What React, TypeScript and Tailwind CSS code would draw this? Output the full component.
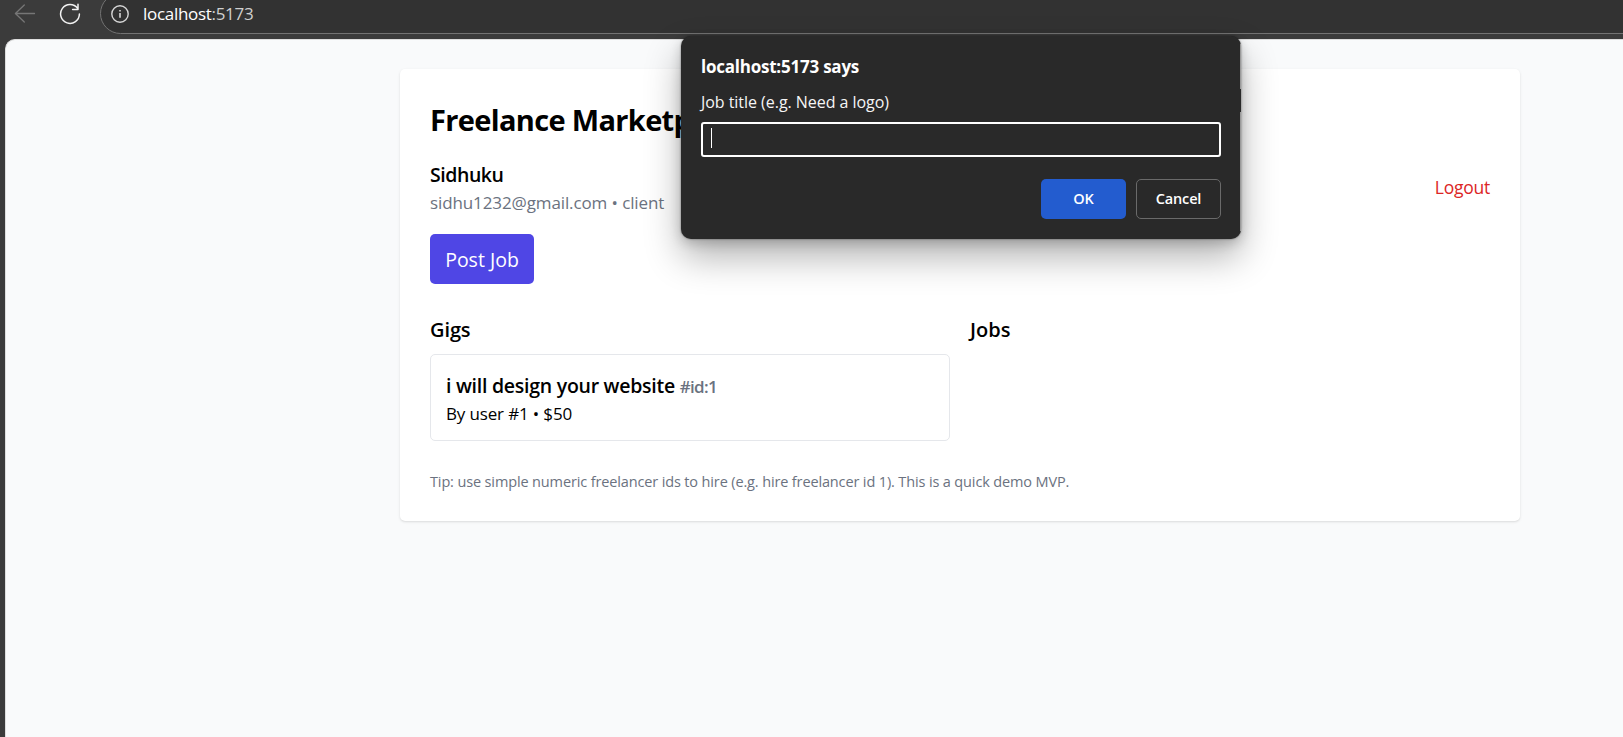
function BrowserBar() {
  return (
    <div className="flex h-[39px] w-full shrink-0 items-start bg-[#3b3b3b]">
      <svg className="ml-[14px] mt-1 h-5 w-[22px] shrink-0" viewBox="0 0 22 20" fill="none" stroke="#767676" strokeWidth="1.3" strokeLinecap="round" strokeLinejoin="round">
        <path d="M20.5 9.5H1.5M10.3 1 1.4 9.5l8.9 8.5" />
      </svg>
      <svg className="ml-[23px] mt-[3px] h-[22px] w-[22px] shrink-0" viewBox="0 0 22 22" fill="none" stroke="#f2f2f2" strokeWidth="1.5" strokeLinecap="round" strokeLinejoin="round">
        <path d="M18.6 5.4A9.4 9.4 0 1 0 20.4 11M19 1.2v5.4h-5.4" />
      </svg>
      <div className="ml-[19px] h-[34px] flex-1 overflow-hidden">
        <div className="-mt-[7px] flex h-[41px] w-[1600px] items-center rounded-full border border-[#737373] bg-[#323232] pl-[10px]">
          <svg className="h-[18px] w-[18px] shrink-0" viewBox="0 0 18 18" fill="none" stroke="#d6d6d6" strokeWidth="1.4">
            <circle cx="9" cy="9" r="8.2" />
            <path d="M9 8v4.7M9 5v1.6" strokeWidth="1.6" />
          </svg>
          <span className="ml-[14px] text-[17px] leading-6 tracking-[-0.3px] text-white">
            localhost<span className="text-[#d0d0d0]">:5173</span>
          </span>
        </div>
      </div>
    </div>
  );
}

function PromptDialog() {
  return (
    <div className="absolute left-[681px] top-[36px] flex h-[203px] w-[560px] flex-col rounded-[10px] bg-[#292929] px-5 shadow-[0_0_2px_rgba(0,0,0,0.5),0_18px_36px_rgba(0,0,0,0.3),0_4px_12px_rgba(0,0,0,0.18)]">
      <h2 className="mt-[19px] text-[17px] font-bold leading-6 tracking-[-0.23px] text-white">localhost:5173 says</h2>
      <p className="mt-[11px] text-[16px] leading-6 tracking-[-0.04px] text-[#f5f5f5]">Job title (e.g. Need a logo)</p>
      <div className="mt-2 flex h-[35px] shrink-0 items-center rounded-[3px] border-2 border-white pl-[8px]">
        <span className="-mt-[3px] h-5 w-px bg-white" />
      </div>
      <div className="mt-[22px] flex justify-end gap-[10px]">
        <button className="h-10 w-[85px] rounded-[5px] bg-[#235ccf] pb-px text-[14.5px] font-semibold text-white">OK</button>
        <button className="h-10 w-[85px] rounded-[5px] border border-[#6a6a6a] text-[14.5px] font-semibold tracking-[-0.15px] text-white">Cancel</button>
      </div>
      <span className="absolute right-0 top-[8px] h-[45px] w-px bg-[#9a9a9a]" />
      <span className="absolute bottom-[8px] right-0 h-[119px] w-px bg-[#9a9a9a]" />
    </div>
  );
}

export default function App() {
  return (
    <div className="relative flex h-[737px] w-full flex-col overflow-hidden bg-[#3b3b3b] font-['Open_Sans',sans-serif] text-black">
      <BrowserBar />
      <main className="ml-[5px] flex-1 rounded-tl-[10px] border-l border-t border-[#dedede] bg-[#f9fafb] pl-[394px] pt-[29px]">
        <section className="h-[452px] w-[1120px] rounded-[5px] bg-white px-[30px] pt-[31px] shadow-[0_1px_3px_rgba(0,0,0,0.1),0_1px_2px_-1px_rgba(0,0,0,0.1)]">
          <h1 className="w-[251px] overflow-hidden whitespace-nowrap text-[29px] font-bold leading-10 tracking-[-0.66px]">Freelance Marketp</h1>
          <div className="mt-5 flex items-center justify-between">
            <div>
              <div className="text-[19.5px] font-semibold leading-[30px] tracking-[-0.45px]">Sidhuku</div>
              <div className="text-[17px] leading-[25px] tracking-[-0.11px] text-[#6b7280]">sidhu1232@gmail.com • client</div>
            </div>
            <button className="text-[17.5px] leading-[25px] tracking-[-0.25px] text-[#dc2626]">Logout</button>
          </div>
          <button className="mt-[19px] block h-[50px] w-[104px] rounded-[5px] bg-[#4f46e5] pt-[2px] text-[19.5px] text-white">Post Job</button>
          <div className="mt-[31px] grid grid-cols-2 gap-5">
            <div>
              <h3 className="text-[20px] font-semibold leading-[30px] tracking-[-0.1px]">Gigs</h3>
              <div className="mt-[9px] h-[87px] rounded-[5px] border border-[#e5e7eb] px-[15px] pt-[16px]">
                <div className="text-[19.5px] font-semibold leading-[30px] tracking-[-0.26px]">
                  i will design your website <span className="text-[17px] tracking-[-0.7px] text-[#6b7280]">#id:1</span>
                </div>
                <div className="-mt-px text-[17px] leading-[25px] tracking-[-0.15px]">By user #1 • $50</div>
              </div>
            </div>
            <div>
              <h3 className="text-[20px] font-semibold leading-[30px]">Jobs</h3>
            </div>
          </div>
          <p className="mt-[31px] text-[14.5px] leading-5 tracking-[-0.135px] text-[#6b7280]">
            Tip: use simple numeric freelancer ids to hire (e.g. hire freelancer id 1). This is a quick demo MVP.
          </p>
        </section>
      </main>
      <PromptDialog />
    </div>
  );
}
